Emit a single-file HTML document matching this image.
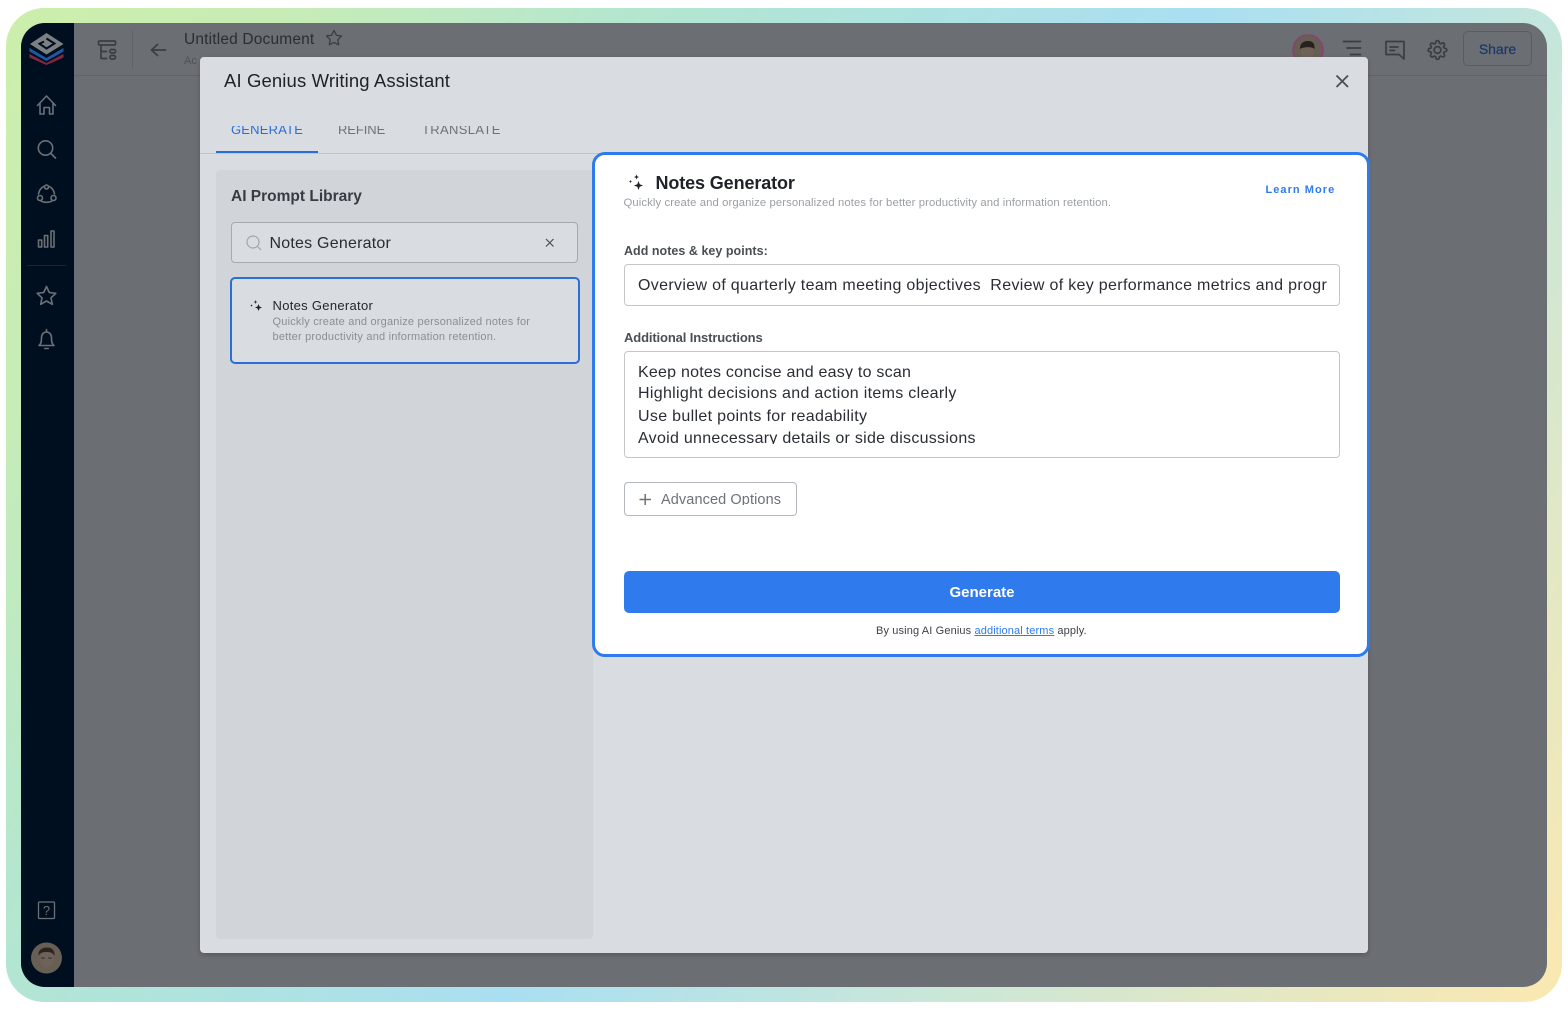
<!DOCTYPE html>
<html><head><meta charset="utf-8"><style>
*{box-sizing:border-box}
html,body{margin:0;padding:0;width:1568px;height:1010px;background:#fff;overflow:hidden;font-family:"Liberation Sans",sans-serif}
.a{position:absolute;white-space:nowrap}
svg{position:absolute;overflow:visible}
.clip{overflow:hidden}
</style></head><body>
<div class="a" style="left:5.500px;top:8px;width:1556.500px;height:994px;border-radius:38px;background:linear-gradient(125deg,#cdeeab 0%,#c8ecb6 12%,#b4e6cf 28%,#a9dff2 53%,#c9e7d8 72%,#fce8b0 100%)"></div>
<div class="a" style="left:21px;top:23px;width:1526px;height:964px;border-radius:24px;background:#6b6e73;overflow:hidden">
 <div class="a" style="left:0;top:0;width:53px;height:964px;background:#000f1f"></div>
 <div class="a" style="left:53px;top:52px;width:1473px;height:1px;background:#60646a"></div>
</div>
<!-- logo -->
<svg style="left:0;top:0" width="100" height="80">
<path d="M29.500 54L46.500 63L63.500 54V57.500L46.500 65L29.500 57.500Z" fill="#8a2540"/>
<path d="M29.500 48L46.500 58L63.500 48V51.500L46.500 61L29.500 51.500Z" fill="#1d5aa5"/>
<path d="M46.500 33L63.500 44L46.500 54.500L30 44Z" fill="#7c7f83"/>
<path d="M46.500 38.500L54.500 43.500L46.500 48.500L39.500 43.800L44 41.500" fill="none" stroke="#000f1f" stroke-width="2"/>
</svg>
<!-- sidebar icons -->
<svg style="left:0;top:0" width="100" height="1000" fill="none" stroke="#6c7076" stroke-width="1.600" stroke-linejoin="round" stroke-linecap="round">
<path d="M37.500 105.500L46.500 96L55.500 105.500M40 103.500V114H44V107.500H49.500V114H53V103.500"/>
<circle cx="45.500" cy="148" r="7.200"/><path d="M51 153.500L55.500 158"/>
<path d="M38.500 194C39.500 188.500 43 186 46.500 186C50 186 53.500 188.500 54.500 194M41 201C44 202.800 49 202.800 52 201"/>
<circle cx="46.500" cy="187" r="2" fill="#000f1f"/><circle cx="40" cy="198" r="2.500" fill="#000f1f"/><circle cx="53.500" cy="198" r="2.500" fill="#000f1f"/>
<rect x="38.500" y="240" width="3.200" height="7"/><rect x="44.500" y="235.500" width="3.200" height="11.500"/><rect x="51" y="231" width="3" height="16"/>
<path d="M46.500 286.500L49.300 292.500L55.800 293.300L51 297.800L52.300 304.300L46.500 301L40.700 304.300L42 297.800L37.200 293.300L43.700 292.500Z"/>
<path d="M39 345.500C41 344 41.500 342 41.500 338C41.500 334.500 43.500 332 46.500 332C49.500 332 51.500 334.500 51.500 338C51.500 342 52 344 54 345.500ZM46.500 329.500V332M44.800 348.500H48.200"/>
<rect x="38.500" y="902" width="16" height="16.500" rx="1" stroke-width="1.300"/>
</svg>
<div class="a" style="left:38px;top:902px;width:17px;height:17px;text-align:center;font-size:13px;line-height:17px;color:#6c7076">?</div>
<div class="a" style="left:27px;top:265px;width:39px;height:1px;background:#1a2633"></div>
<!-- bottom avatar -->
<svg style="left:0;top:0" width="100" height="1000">
<circle cx="46.500" cy="958" r="15.500" fill="#675f54"/>
<ellipse cx="46.500" cy="959" rx="7" ry="8.500" fill="#6f6258"/>
<path d="M38.500 956C38 950 42 947.500 47 947.500C52 947.500 55 950.500 54.500 956C53 952.500 50 952 46.500 952C43 952 40 952.500 38.500 956Z" fill="#2c2421"/>
<path d="M41 958H45M48 958H52" stroke="#3d3a38" stroke-width="1.300"/>
</svg>
<!-- top bar -->
<svg style="left:0;top:0" width="1568" height="80" fill="none" stroke="#3a3e44" stroke-width="1.700" stroke-linecap="round" stroke-linejoin="round">
<rect x="98.500" y="41" width="17" height="4" rx="1"/>
<path d="M101 45V58.500H106.500M101 51.500H106.500"/>
<rect x="110" y="49.500" width="5.500" height="3.500" rx="1.500"/><rect x="110" y="55.500" width="5.500" height="3.500" rx="1.500"/>
<path d="M132.500 30V68" stroke="#5f6368" stroke-width="1"/>
<path d="M165.500 50H152M157.500 44.500L151.500 50L157.500 55.500"/>
<path d="M334 30.500L336.400 35.300L341.500 36L337.800 39.700L338.700 44.800L334 42.400L329.300 44.800L330.200 39.700L326.500 36L331.600 35.300Z" stroke-width="1.300"/>
<circle cx="1308" cy="50" r="15" fill="#675f54" stroke="#8a3f75" stroke-width="1.600"/>
<ellipse cx="1307.500" cy="52" rx="6.500" ry="8" fill="#6f6258" stroke="none"/>
<path d="M1300 49C1300 43.500 1303 41 1308 41C1313 41 1315 44 1314.500 49C1312 46.500 1304 46.500 1300 49Z" fill="#27211e" stroke="none"/>
<path d="M1343.500 41.500H1360.500M1347 48H1360.500M1350.500 54.500H1360.500" stroke-width="1.800"/>
<path d="M1386 41.500H1404V59L1399 54.500H1386ZM1390 47H1398M1390 50.500H1394.500" stroke-width="1.700"/>
<g transform="translate(1427.300 39.800) scale(.85)" stroke-width="2"><circle cx="12" cy="12" r="4"/><path d="M19.400 15a1.650 1.650 0 0 0 .33 1.820l.06.06a2 2 0 0 1 0 2.830 2 2 0 0 1-2.830 0l-.06-.06a1.650 1.650 0 0 0-1.820-.33 1.650 1.650 0 0 0-1 1.510V21a2 2 0 0 1-2 2 2 2 0 0 1-2-2v-.09A1.650 1.650 0 0 0 9 19.400a1.650 1.650 0 0 0-1.820.33l-.06.06a2 2 0 0 1-2.830 0 2 2 0 0 1 0-2.830l.06-.06a1.650 1.650 0 0 0 .33-1.820 1.650 1.650 0 0 0-1.510-1H3a2 2 0 0 1-2-2 2 2 0 0 1 2-2h.09A1.650 1.650 0 0 0 4.600 9a1.650 1.650 0 0 0-.33-1.820l-.06-.06a2 2 0 0 1 0-2.830 2 2 0 0 1 2.830 0l.06.06a1.650 1.650 0 0 0 1.820.33H9a1.650 1.650 0 0 0 1-1.510V3a2 2 0 0 1 2-2 2 2 0 0 1 2 2v.09a1.650 1.650 0 0 0 1 1.510 1.650 1.650 0 0 0 1.820-.33l.06-.06a2 2 0 0 1 2.830 0 2 2 0 0 1 0 2.830l-.06.06a1.650 1.650 0 0 0-.33 1.820V9a1.650 1.650 0 0 0 1.510 1H21a2 2 0 0 1 2 2 2 2 0 0 1-2 2h-.09a1.650 1.650 0 0 0-1.510 1z"/></g>
</svg>
<div class="a" style="left:184px;top:30px;font-size:15.500px;line-height:20px;color:#2a2e33;letter-spacing:.17px">Untitled Document</div>
<div class="a" style="left:184px;top:54px;font-size:11px;line-height:14px;color:#4e5258">Ac</div>
<div class="a" style="left:1463px;top:31px;width:69px;height:35px;border:1px solid #48607f;border-radius:5px;text-align:center;font-size:14px;line-height:34px;color:#17386b;-webkit-text-stroke:.2px #17386b">Share</div>
<!-- modal -->
<div class="a" style="left:200px;top:57px;width:1168px;height:896px;background:#d9dce1;border-radius:4px;box-shadow:0 2px 5px rgba(0,0,0,.2)"></div>
<div class="a" style="left:224px;top:69px;font-size:18.500px;line-height:24px;color:#1f2227;letter-spacing:.12px">AI Genius Writing Assistant</div>
<svg style="left:0;top:0" width="1400" height="100" fill="none" stroke="#4a4e55" stroke-width="1.800"><path d="M1336.500 75.500L1348 87M1348 75.500L1336.500 87"/></svg>
<div class="a clip" style="left:200px;top:126px;width:400px;height:10px;font-size:13px;color:#5f6f85">
 <div class="a" style="left:31px;top:-4px;color:#2a6fd4;letter-spacing:.2px">GENERATE</div>
 <div class="a" style="left:138px;top:-4px;color:#6d737b;letter-spacing:-.08px">REFINE</div>
 <div class="a" style="left:222px;top:-4px;color:#6d737b;letter-spacing:.35px">TRANSLATE</div>
</div>
<div class="a" style="left:200px;top:153px;width:400px;height:1px;background:#c1c5cb"></div>
<div class="a" style="left:216px;top:151px;width:102px;height:2px;background:#2a6fd4"></div>
<!-- left panel -->
<div class="a" style="left:216px;top:170px;width:377px;height:769px;background:#d1d5d9;border-radius:4px"></div>
<div class="a" style="left:231px;top:187px;font-size:15.500px;line-height:20px;font-weight:700;color:#373c44">AI Prompt Library</div>
<div class="a" style="left:231px;top:222px;width:347px;height:41px;background:#d9dce1;border:1px solid #a6aaaf;border-radius:4px"></div>
<svg style="left:0;top:0" width="600" height="340" fill="none" stroke="#a2a6ab" stroke-width="1.200"><circle cx="253" cy="242" r="6"/><path d="M257.500 246.500L261 250"/><path d="M546 239L553.500 246.500M553.500 239L546 246.500" stroke="#4a4e55"/></svg>
<div class="a" style="left:269.500px;top:233px;font-size:16px;line-height:21px;color:#2a2d33;letter-spacing:.22px">Notes Generator</div>
<div class="a" style="left:230px;top:277px;width:350px;height:87px;background:#d9dce1;border:2px solid #2a6fd4;border-radius:5px"></div>
<svg style="left:0;top:0" width="700" height="200" fill="#1f2227">
<path d="M258.500 304L259.500 306.500L262 307.500L259.500 308.500L258.500 311L257.500 308.500L255 307.500L257.500 306.500Z"/>
<path d="M254.500 300L255 301.500L256.500 302L255 302.500L254.500 304L254 302.500L252.500 302L254 301.500Z" transform="translate(1 0)"/>
<path d="M251.500 304.500L252 305L252.500 305.500L252 306L251.500 306.500L251 306L250.500 305.500L251 305Z"/>
</svg>
<div class="a" style="left:272.500px;top:298px;font-size:13px;line-height:16px;color:#24272c;letter-spacing:.3px">Notes Generator</div>
<div class="a" style="left:272.500px;top:315px;font-size:11px;line-height:15px;color:#8a8e95;letter-spacing:.2px">Quickly create and organize personalized notes for<br>better productivity and information retention.</div>
<!-- right card -->
<div class="a" style="left:592px;top:152px;width:778px;height:505px;background:#fff;border:3px solid #2f7bee;border-radius:13px"></div>
<svg style="left:0;top:0" width="700" height="200" fill="#1f2227">
<path d="M638.500 181L639.700 184.300L643 185.500L639.700 186.700L638.500 190L637.300 186.700L634 185.500L637.300 184.300Z"/>
<path d="M636.500 174.500L637.200 176.300L639 177L637.200 177.700L636.500 179.500L635.800 177.700L634 177L635.800 176.300Z"/>
<path d="M630.500 180L631 181L632 181.500L631 182L630.500 183L630 182L629 181.500L630 181Z"/>
</svg>
<div class="a" style="left:655.500px;top:172px;font-size:18px;line-height:22px;font-weight:700;color:#1f2227;letter-spacing:-.12px">Notes Generator</div>
<div class="a" style="left:623.500px;top:196px;font-size:11.300px;line-height:14px;color:#9a9ea4;letter-spacing:.1px">Quickly create and organize personalized notes for better productivity and information retention.</div>
<div class="a" style="left:1265.500px;top:183px;font-size:11px;line-height:14px;font-weight:700;color:#2f7bee;letter-spacing:1.050px">Learn More</div>
<div class="a" style="left:624px;top:244px;font-size:12.500px;line-height:15px;font-weight:700;color:#4b4f55;letter-spacing:.03px">Add notes &amp; key points:</div>
<div class="a" style="left:624px;top:264px;width:716px;height:42px;border:1px solid #c4c6c9;border-radius:4px"></div>
<div class="a clip" style="left:638px;top:267px;width:689px;height:38px;font-size:16px;line-height:37px;color:#2a2d33;letter-spacing:.34px;word-spacing:-.1px">Overview of quarterly team meeting objectives&nbsp; Review of key performance metrics and progress</div>
<div class="a" style="left:624px;top:330px;font-size:13px;line-height:15px;font-weight:700;color:#4b4f55;letter-spacing:-.13px">Additional Instructions</div>
<div class="a" style="left:624px;top:351px;width:716px;height:107px;border:1px solid #c4c6c9;border-radius:4px"></div>
<div class="a clip" style="left:638px;top:361px;width:690px;height:85px;font-size:16px;color:#2a2d33;line-height:22px">
<div class="a clip" style="left:0;top:1px;height:17px;line-height:21px;letter-spacing:.23px">Keep notes concise and easy to scan</div>
<div class="a" style="left:0;top:22px;letter-spacing:.31px">Highlight decisions and action items clearly</div>
<div class="a" style="left:0;top:45px;letter-spacing:.32px">Use bullet points for readability</div>
<div class="a clip" style="left:0;top:67px;height:16px;line-height:21px;letter-spacing:.28px">Avoid unnecessary details or side discussions</div>
</div>
<div class="a" style="left:624px;top:482px;width:173px;height:34px;border:1px solid #b4b7bb;border-radius:4px"></div>
<svg style="left:0;top:0" width="700" height="520" fill="none" stroke="#6d7178" stroke-width="1.500"><path d="M639.500 499.500H651M645.200 494V505"/></svg>
<div class="a clip" style="left:661px;top:490px;height:15px;font-size:14.500px;line-height:20px;color:#6d7178;letter-spacing:.1px">Advanced Options</div>
<div class="a" style="left:624px;top:571px;width:716px;height:42px;background:#2f7bee;border-radius:5px;text-align:center;font-size:15px;line-height:43px;font-weight:700;color:#fff">Generate</div>
<div class="a" style="left:876px;top:625px;font-size:11px;line-height:13px;color:#3e4248;letter-spacing:.13px">By using AI Genius <span style="color:#2f7bee;text-decoration:underline">additional terms</span> apply.</div>
</body></html>
